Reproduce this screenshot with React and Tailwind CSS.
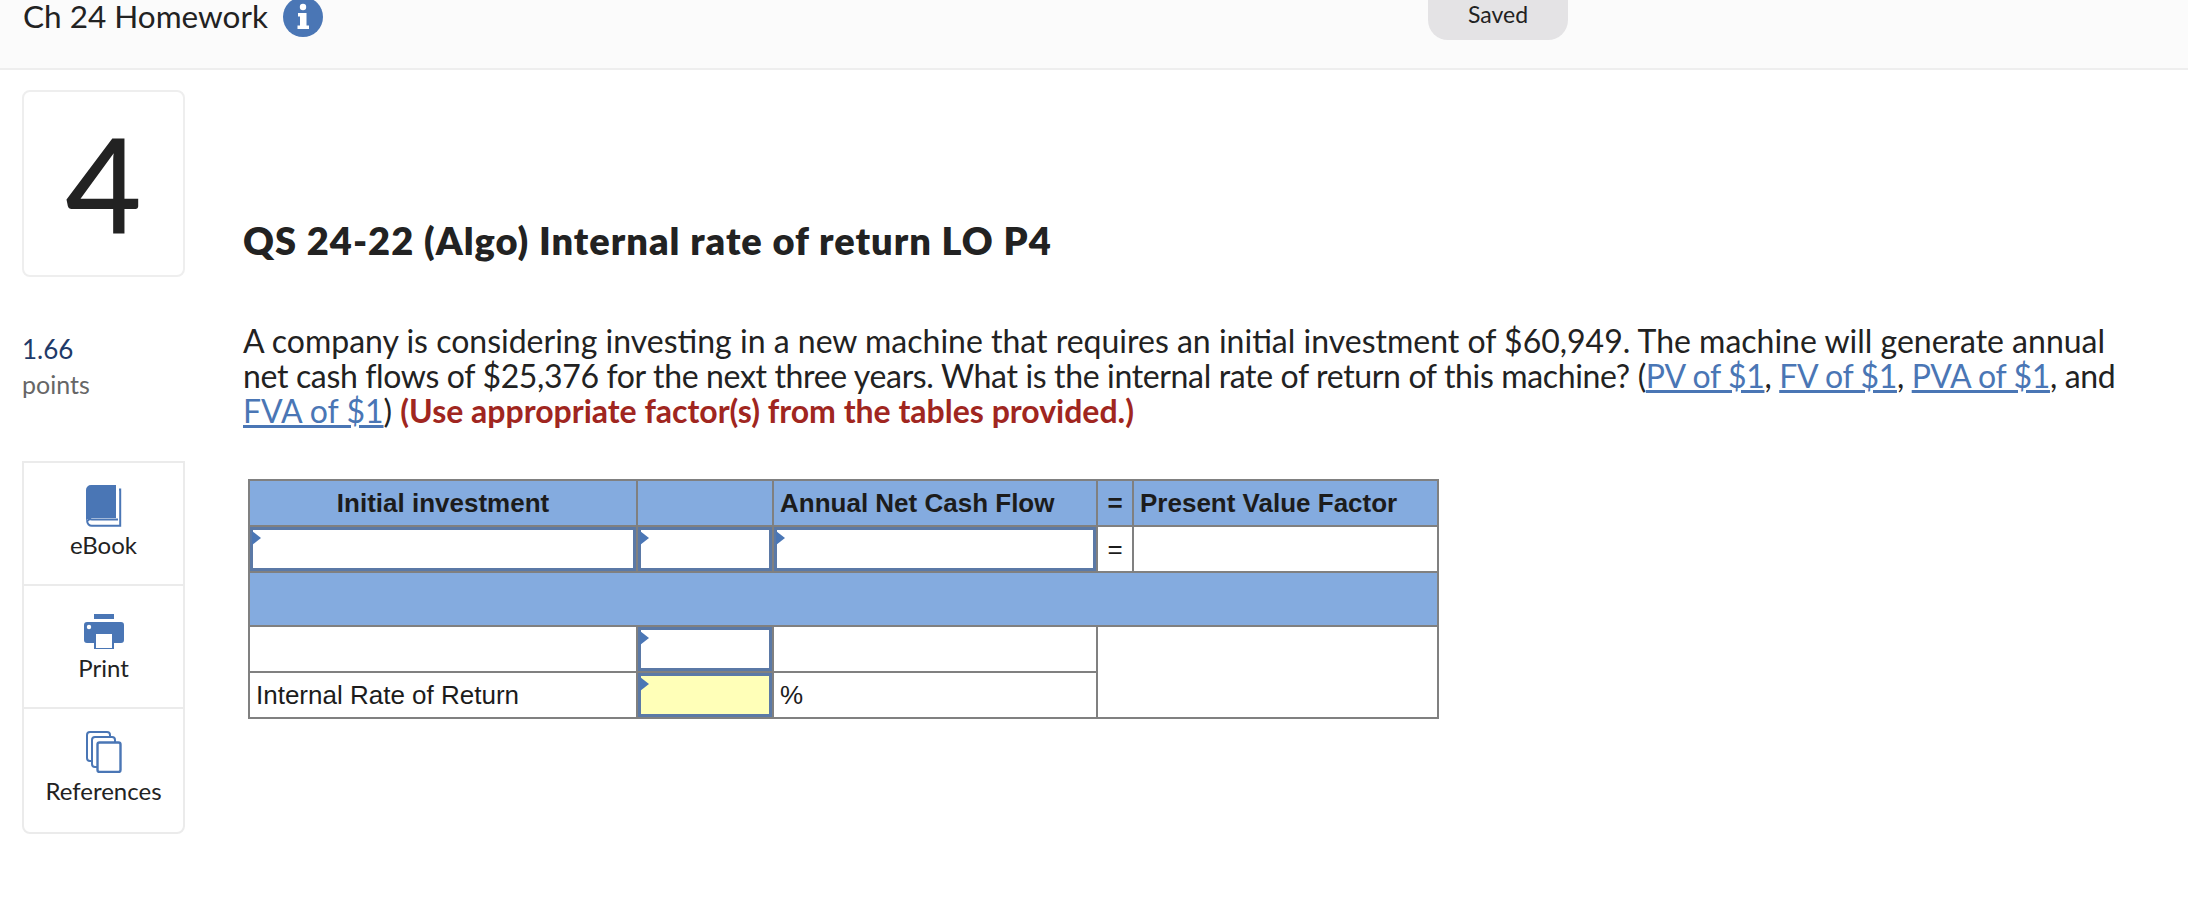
const BookIcon = () => (
  <svg width="36" height="42" viewBox="0 0 36 42" fill="none">
    <path d="M5 0h25v33H6a5 5 0 0 0-1 .1A5 5 0 0 0 0 36V5a5 5 0 0 1 5-5z" fill="#4a76b5" />
    <path d="M33 4.500h1.200V40.800H6A4.600 4.600 0 0 1 1.200 36 4.600 4.600 0 0 1 6 34.500h26" stroke="#4a76b5" strokeWidth="2" />
    <path d="M1 30h4v4H1z" fill="#4a76b5" />
  </svg>
)

const PrintIcon = () => (
  <svg width="40" height="36" viewBox="0 0 40 36" fill="none">
    <rect x="10" y="0" width="20" height="5" fill="#4a76b5" />
    <path d="M3 8h34a3 3 0 0 1 3 3v15a3 3 0 0 1-3 3H30v6H10v-6H3a3 3 0 0 1-3-3V11a3 3 0 0 1 3-3z" fill="#4a76b5" />
    <rect x="12" y="20" width="16" height="14" fill="#fff" />
    <circle cx="5" cy="13" r="2.2" fill="#fff" />
  </svg>
)

const ReferencesIcon = () => (
  <svg width="36" height="42" viewBox="0 0 36 42" fill="#fff" stroke="#4a76b5" strokeWidth="2">
    <rect x="1" y="1" width="23" height="29" rx="3" />
    <rect x="6" y="6" width="23" height="30" rx="3" />
    <rect x="11.500" y="11.500" width="23" height="29.500" rx="2" strokeWidth="2.400" />
  </svg>
)

const InfoIcon = () => (
  <svg width="40" height="40" viewBox="0 0 40 40" className="-mt-[3px]">
    <circle cx="20" cy="20" r="20" fill="#4a76b5" />
    <circle cx="20" cy="10" r="3.200" fill="#fff" />
    <path d="M15 16h8.500v12.500H26V32H14.500v-3.500H17V19.500h-2z" fill="#fff" />
  </svg>
)

const Tool = ({ icon, label, last }) => (
  <div className={`flex h-[123px] flex-col items-center ${last ? '' : 'border-b-2 border-[#ebebeb]'}`}>
    <div className="flex h-[66px] items-end pb-[2px]">{icon}</div>
    <span className="mt-[2px] text-[24px] leading-[28px] text-[#222]">{label}</span>
  </div>
)

const CellInput = ({ yellow }) => (
  <div className={`relative h-full border-[3px] border-[#5b79a6] ${yellow ? 'bg-[#ffffb8]' : 'bg-white'}`}>
    <span className="absolute -left-[1px] top-[1px] h-0 w-0 border-y-[7px] border-l-[9px] border-y-transparent border-l-[#4a76b5]" />
  </div>
)

const cell = 'border-2 border-[#808080] p-0 align-middle'
const head = `${cell} bg-[#84abdf] font-bold text-[#1c1c1c]`
const link = 'text-[#4a76b5] underline'

export default function App() {
  return (
    <div className="min-h-[900px] bg-white font-['Lato',sans-serif] text-[#222]">
      <header className="relative flex h-[70px] items-start border-b-2 border-[#eeeeee] bg-[#fbfbfb] pl-[23px]">
        <h2 className="text-[31.5px] leading-[32px]">Ch 24 Homework</h2>
        <div className="ml-[15px]">
          <InfoIcon />
        </div>
        <div className="absolute left-[1428px] top-0 flex h-[40px] w-[140px] items-center justify-center rounded-b-[20px] bg-[#e4e3e5] pb-[11px] text-[23px]">
          Saved
        </div>
      </header>

      <div className="flex pt-[20px]">
        <aside className="ml-[22px] w-[163px] shrink-0">
          <div className="flex h-[187px] items-center justify-center rounded-[8px] border-2 border-[#eeeeee] pb-[4px] text-[132px] font-medium leading-none text-[#222]">
            4
          </div>
          <div className="mt-[54px] text-[26px] leading-[36px] text-[#1f3a68]">1.66</div>
          <div className="-mt-[1px] text-[25px] leading-[36px] text-[#666]">points</div>
          <div className="mt-[59px] rounded-b-[8px] border-2 border-[#ebebeb]">
            <Tool icon={<BookIcon />} label="eBook" />
            <Tool icon={<PrintIcon />} label="Print" />
            <Tool icon={<ReferencesIcon />} label="References" last />
          </div>
        </aside>

        <main className="ml-[58px] flex-1">
          <h1 className="mt-[128px] text-[38px] font-extrabold leading-[44px] tracking-[1px] text-[#222]">
            QS 24-22 (Algo) Internal rate of return LO P4
          </h1>
          <p className="mt-[61px] whitespace-nowrap text-[32px] leading-[35px] text-[#222]">
            A company is considering investing in a new machine that requires an initial investment of $60,949. The machine will generate annual
            <br />
            <span className="tracking-[-0.35px]">
              net cash flows of $25,376 for the next three years. What is the internal rate of return of this machine? (
              <a className={link}>PV of $1</a>, <a className={link}>FV of $1</a>, <a className={link}>PVA of $1</a>, and
            </span>
            <br />
            <a className={link}>FVA of $1</a>){' '}
            <strong className="font-bold text-[#a02620]">(Use appropriate factor(s) from the tables provided.)</strong>
          </p>

          <table className="ml-[5px] mt-[51px] w-[1189px] table-fixed border-collapse font-['Liberation_Sans',Arial,sans-serif] text-[26px] text-[#1c1c1c]">
            <colgroup>
              <col className="w-[388px]" />
              <col className="w-[136px]" />
              <col className="w-[324px]" />
              <col className="w-[36px]" />
              <col className="w-[305px]" />
            </colgroup>
            <tbody>
              <tr className="h-[46px]">
                <th className={`${head} text-center`}>Initial investment</th>
                <th className={head}></th>
                <th className={`${head} pl-[6px] text-left`}>Annual Net Cash Flow</th>
                <th className={`${head} text-center`}>=</th>
                <th className={`${head} pl-[6px] text-left`}>Present Value Factor</th>
              </tr>
              <tr className="h-[46px]">
                <td className={`${cell} h-[46px]`}><CellInput /></td>
                <td className={`${cell} h-[46px]`}><CellInput /></td>
                <td className={`${cell} h-[46px]`}><CellInput /></td>
                <td className={`${cell} text-center`}>=</td>
                <td className={cell}></td>
              </tr>
              <tr className="h-[54px]">
                <td colSpan={5} className={`${cell} bg-[#84abdf]`}></td>
              </tr>
              <tr className="h-[46px]">
                <td className={cell}></td>
                <td className={`${cell} h-[46px]`}><CellInput /></td>
                <td className={cell}></td>
                <td rowSpan={2} colSpan={2} className={cell}></td>
              </tr>
              <tr className="h-[46px]">
                <td className={`${cell} pl-[6px]`}>Internal Rate of Return</td>
                <td className={`${cell} h-[46px]`}><CellInput yellow /></td>
                <td className={`${cell} pl-[6px]`}>%</td>
              </tr>
            </tbody>
          </table>
        </main>
      </div>
    </div>
  )
}
